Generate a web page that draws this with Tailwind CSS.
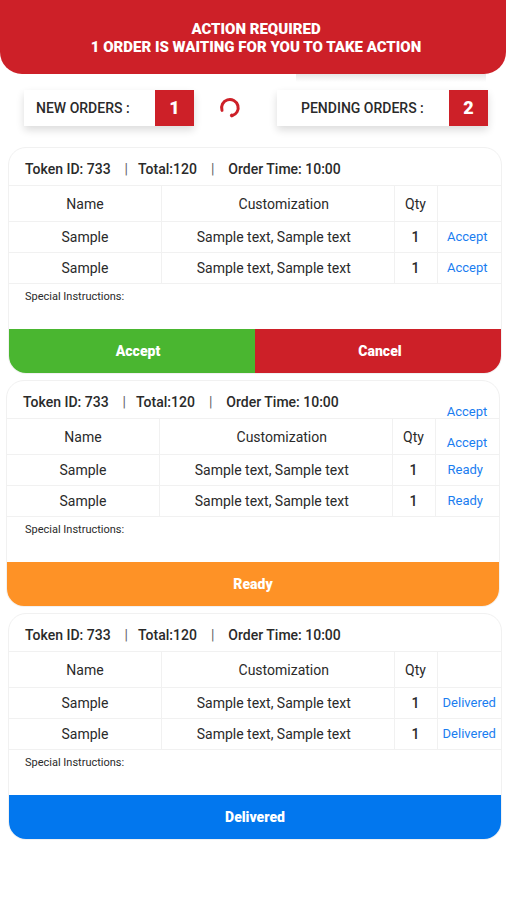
<!DOCTYPE html>
<html lang="en">
<head>
<meta charset="utf-8">
<meta name="viewport" content="width=device-width, initial-scale=1">
<title>Orders</title>
<script src="https://cdn.jsdelivr.net/npm/@tailwindcss/browser@4"></script>
</head>
<body class="min-h-screen bg-white font-['Roboto',sans-serif] text-[14px] leading-4 text-[#2a2a2a]">
<header class="relative rounded-b-[22px] bg-[#cd2028] pt-5 pb-[18px] pl-1.5 text-center text-white">
  <h1 class="text-[15px] leading-[18px] font-black">ACTION REQUIRED<br>1 ORDER IS WAITING FOR YOU TO TAKE ACTION</h1>
  <div class="absolute top-full right-5 h-2 w-[190px] bg-linear-to-b from-black/10 to-transparent"></div>
</header>

<section class="flex items-center pt-4 pr-[18px] pl-6" aria-label="Order counts">
  <div class="flex h-9 w-[170px] items-stretch justify-between bg-white shadow-[0_4px_8px_rgba(0,0,0,0.14)]">
    <span class="self-center pl-3 font-medium">NEW ORDERS :</span>
    <span class="flex w-[39px] items-center justify-center bg-[#cd2028] text-[18px] font-black text-white">1</span>
  </div>
  <button type="button" aria-label="Refresh" class="ml-[25px] text-[#cd2028]">
    <svg class="block size-[22px]" viewBox="0 0 22 22" fill="none" stroke="currentColor" stroke-width="3" stroke-linecap="round"><path d="M3 13.4A8.3 8.3 0 1 1 13 18.8"/><circle cx="12.8" cy="18.4" r="1.4" fill="currentColor" stroke-width="1"/></svg>
  </button>
  <div class="ml-auto flex h-9 w-[211px] items-stretch justify-between bg-white shadow-[0_4px_8px_rgba(0,0,0,0.14)]">
    <span class="self-center pl-6 font-medium">PENDING ORDERS :</span>
    <span class="flex w-[39px] items-center justify-center bg-[#cd2028] text-[18px] font-black text-white">2</span>
  </div>
</section>

<main class="flex flex-col gap-1.5 pt-[21px]">
  <article class="mr-1 ml-2 overflow-hidden rounded-[18px] border border-[#f1f1f1]">
    <h2 class="flex h-[37px] items-center pt-1 pl-4 font-medium"><span>Token ID: 733</span><span class="pr-2.5 pl-3.5 font-normal text-[#666]">|</span><span>Total:120</span><span class="px-3.5 font-normal text-[#666]">|</span><span>Order Time: 10:00</span></h2>
    <table class="w-full table-fixed border-collapse text-center">
      <colgroup><col class="w-[31%]"><col><col class="w-[43px]"><col class="w-16"></colgroup>
      <thead><tr class="h-9 border-y border-[#f1f1f1]"><th class="border-r border-[#f1f1f1] font-normal">Name</th><th class="border-r border-[#f1f1f1] pl-3 font-normal">Customization</th><th class="border-r border-[#f1f1f1] font-normal">Qty</th><td></td></tr></thead>
      <tbody>
        <tr class="h-[31px] border-b border-[#f1f1f1]"><td class="border-r border-[#f1f1f1]">Sample</td><td class="border-r border-[#f1f1f1] pr-2">Sample text, Sample text</td><td class="border-r border-[#f1f1f1] font-medium">1</td><td class="pr-1 text-[13px]"><button type="button" class="text-[#1a7df0]">Accept</button></td></tr>
        <tr class="h-[31px] border-b border-[#f1f1f1]"><td class="border-r border-[#f1f1f1]">Sample</td><td class="border-r border-[#f1f1f1] pr-2">Sample text, Sample text</td><td class="border-r border-[#f1f1f1] font-medium">1</td><td class="pr-1 text-[13px]"><button type="button" class="text-[#1a7df0]">Accept</button></td></tr>
      </tbody>
    </table>
    <p class="h-[45px] pt-[5px] pl-4 text-[11px]">Special Instructions:</p>
    <div class="grid grid-cols-2 font-black text-white">
      <button type="button" class="h-11 bg-[#4ab630] pl-3">Accept</button>
      <button type="button" class="h-11 bg-[#cd2028] pl-1">Cancel</button>
    </div>
  </article>

  <article class="relative mx-1.5 overflow-hidden rounded-[18px] border border-[#f1f1f1]">
    <h2 class="flex h-[37px] items-center pt-1 pl-4 font-medium"><span>Token ID: 733</span><span class="pr-2.5 pl-3.5 font-normal text-[#666]">|</span><span>Total:120</span><span class="px-3.5 font-normal text-[#666]">|</span><span>Order Time: 10:00</span></h2>
    <div class="absolute top-[23px] right-0 flex w-16 flex-col items-center gap-[15px] text-[13px]">
      <button type="button" class="text-[#1a7df0]">Accept</button>
      <button type="button" class="text-[#1a7df0]">Accept</button>
    </div>
    <table class="w-full table-fixed border-collapse text-center">
      <colgroup><col class="w-[31%]"><col><col class="w-[43px]"><col class="w-16"></colgroup>
      <thead><tr class="h-9 border-y border-[#f1f1f1]"><th class="border-r border-[#f1f1f1] font-normal">Name</th><th class="border-r border-[#f1f1f1] pl-3 font-normal">Customization</th><th class="border-r border-[#f1f1f1] font-normal">Qty</th><td></td></tr></thead>
      <tbody>
        <tr class="h-[31px] border-b border-[#f1f1f1]"><td class="border-r border-[#f1f1f1]">Sample</td><td class="border-r border-[#f1f1f1] pr-2">Sample text, Sample text</td><td class="border-r border-[#f1f1f1] font-medium">1</td><td class="pr-1 text-[13px]"><button type="button" class="text-[#1a7df0]">Ready</button></td></tr>
        <tr class="h-[31px] border-b border-[#f1f1f1]"><td class="border-r border-[#f1f1f1]">Sample</td><td class="border-r border-[#f1f1f1] pr-2">Sample text, Sample text</td><td class="border-r border-[#f1f1f1] font-medium">1</td><td class="pr-1 text-[13px]"><button type="button" class="text-[#1a7df0]">Ready</button></td></tr>
      </tbody>
    </table>
    <p class="h-[45px] pt-[5px] pl-[18px] text-[11px]">Special Instructions:</p>
    <button type="button" class="block h-11 w-full bg-[#fe9226] font-black text-white">Ready</button>
  </article>

  <article class="mr-1 ml-2 overflow-hidden rounded-[18px] border border-[#f1f1f1]">
    <h2 class="flex h-[37px] items-center pt-1 pl-4 font-medium"><span>Token ID: 733</span><span class="pr-2.5 pl-3.5 font-normal text-[#666]">|</span><span>Total:120</span><span class="px-3.5 font-normal text-[#666]">|</span><span>Order Time: 10:00</span></h2>
    <table class="w-full table-fixed border-collapse text-center">
      <colgroup><col class="w-[31%]"><col><col class="w-[43px]"><col class="w-16"></colgroup>
      <thead><tr class="h-9 border-y border-[#f1f1f1]"><th class="border-r border-[#f1f1f1] font-normal">Name</th><th class="border-r border-[#f1f1f1] pl-3 font-normal">Customization</th><th class="border-r border-[#f1f1f1] font-normal">Qty</th><td></td></tr></thead>
      <tbody>
        <tr class="h-[31px] border-b border-[#f1f1f1]"><td class="border-r border-[#f1f1f1]">Sample</td><td class="border-r border-[#f1f1f1] pr-2">Sample text, Sample text</td><td class="border-r border-[#f1f1f1] font-medium">1</td><td class="text-[13px]"><button type="button" class="text-[#1a7df0]">Delivered</button></td></tr>
        <tr class="h-[31px] border-b border-[#f1f1f1]"><td class="border-r border-[#f1f1f1]">Sample</td><td class="border-r border-[#f1f1f1] pr-2">Sample text, Sample text</td><td class="border-r border-[#f1f1f1] font-medium">1</td><td class="text-[13px]"><button type="button" class="text-[#1a7df0]">Delivered</button></td></tr>
      </tbody>
    </table>
    <p class="h-[45px] pt-[5px] pl-4 text-[11px]">Special Instructions:</p>
    <button type="button" class="block h-11 w-full bg-[#0277ee] font-black text-white">Delivered</button>
  </article>
</main>
</body>
</html>
